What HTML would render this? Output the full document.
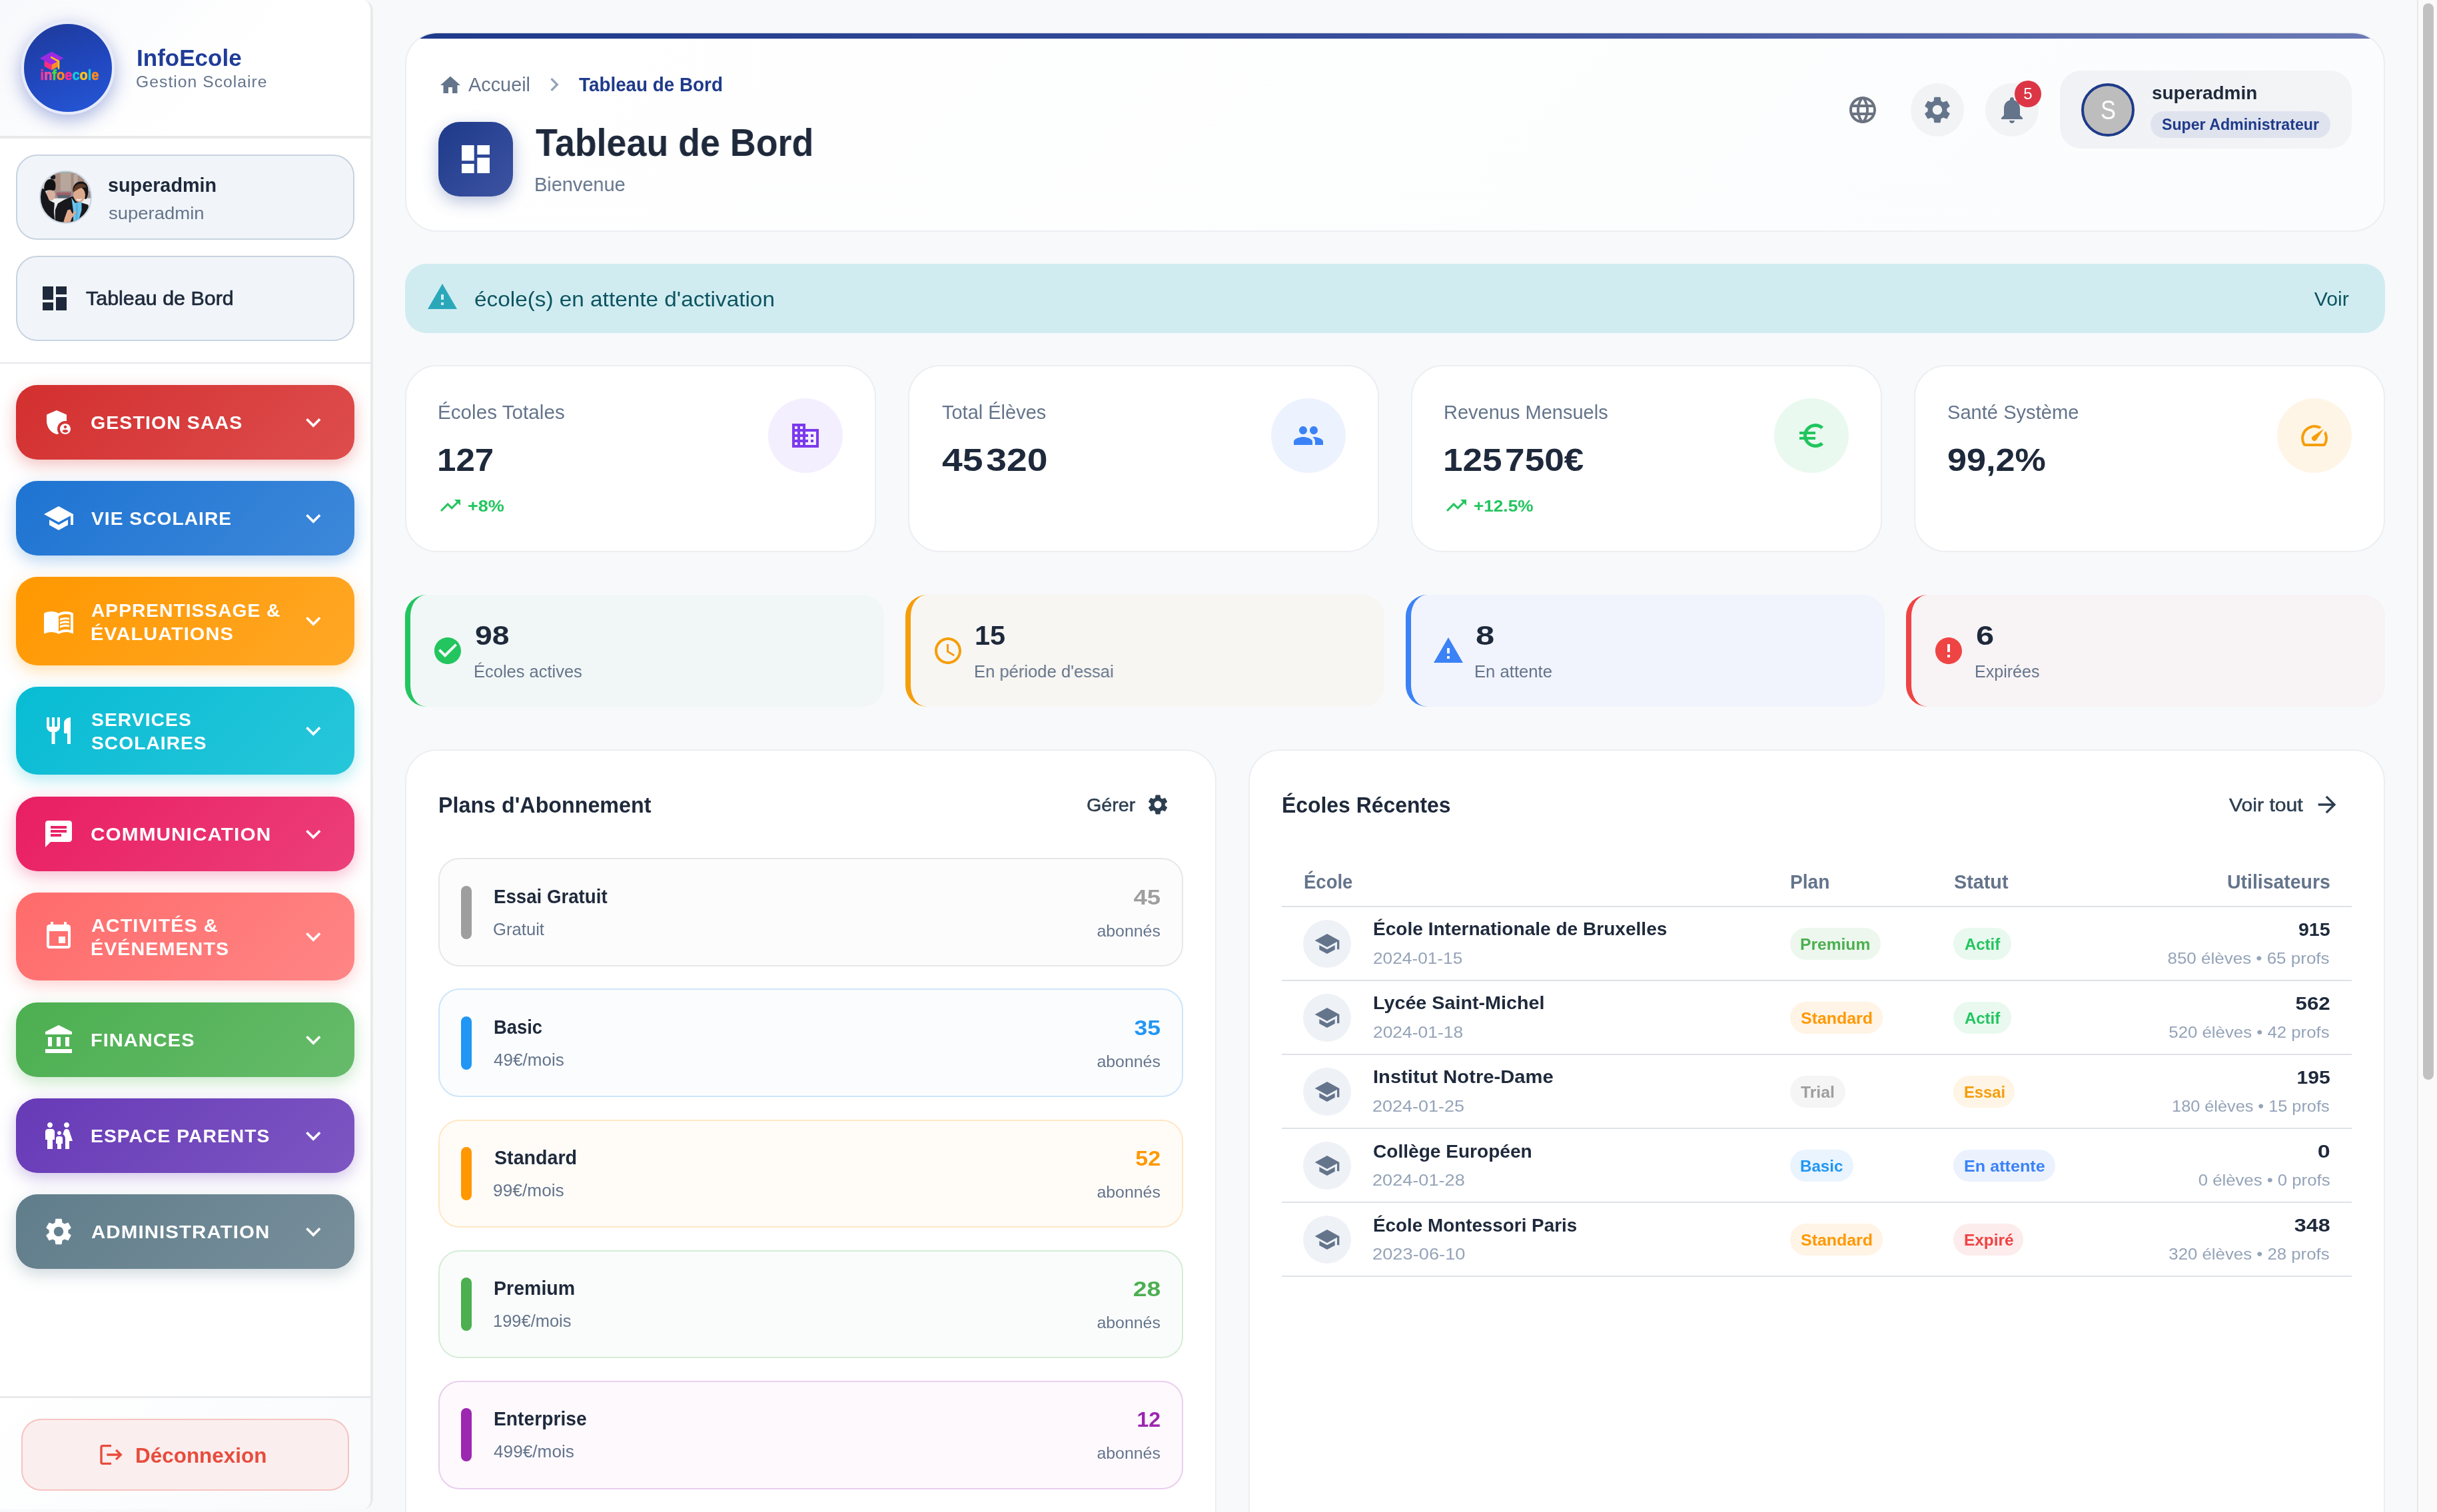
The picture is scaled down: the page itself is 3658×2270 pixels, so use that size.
<!DOCTYPE html>
<html lang="fr">
<head>
<meta charset="utf-8">
<title>InfoEcole - Tableau de Bord</title>
<style>
*{box-sizing:border-box;margin:0;padding:0}
html,body{width:3658px;height:2270px;overflow:hidden;background:#f8f9fb}
body{font-family:"Liberation Sans",sans-serif;color:#1e293b}
#root{position:absolute;left:0;top:0;width:3658px;height:2270px;overflow:hidden;will-change:transform}
svg{display:block;fill:currentColor}
.abs{position:absolute}
.t{position:absolute;white-space:nowrap;line-height:1}
b,.b{font-weight:700}
/* sidebar */
#sb{position:absolute;left:0;top:0;width:560px;height:2266px;background:#fff;border-right:4px solid #eaeaeb;border-radius:0 16px 16px 0;overflow:hidden}
#sbh{position:absolute;left:0;top:0;width:556px;height:208px;border-bottom:4px solid #e9e9ea;background:linear-gradient(135deg,#f8f9fc 0%,#fff 60%)}
#logo{position:absolute;left:32px;top:32px;width:140px;height:140px;border-radius:50%;border:4px solid #e6eafa;background:linear-gradient(160deg,#1e3a9a 0%,#2148c0 55%,#2558d8 100%);box-shadow:0 8px 28px rgba(30,58,170,.38)}
.ucard{position:absolute;left:24px;width:508px;height:127.5px;border-radius:32px;border:2px solid #c7d3e0;background:#f1f5f9}
.cat{position:absolute;left:24px;width:508px;border-radius:32px;color:#fff}
.cat svg.ic{position:absolute;left:40px;width:48px;height:48px}
.cat svg.ch{position:absolute;left:425px;width:40px;height:40px}
.cat .lb{position:absolute;left:112.6px;font-weight:700;font-size:28px;letter-spacing:1px;line-height:23.2px;white-space:nowrap}
#sbf{position:absolute;left:0;top:2096px;width:556px;height:174px;border-top:3px solid #e9eaec;background:linear-gradient(135deg,#fff 0%,#f8fafc 100%)}
#logout{position:absolute;left:32px;top:31px;width:492px;height:108px;border-radius:30px;border:2px solid #f6c3c0;background:#fbeeee;color:#e74c3c}
/* main */
.card{position:absolute;background:#fff;border:2px solid #eceef1;border-radius:48px}
.circ{position:absolute;border-radius:50%}
.chip{position:absolute;height:48px;border-radius:24px;font-weight:700;font-size:26px;line-height:48px;padding:0 22px;white-space:nowrap}
.st{position:absolute;top:893px;width:719px;height:168px;border-radius:32px;border-left:8px solid}
.plan{position:absolute;left:49px;width:1117px;height:164px;border-radius:32px;border:2px solid}
.plan i{position:absolute;left:32px;top:40px;width:16px;height:80px;border-radius:8px}
.row{position:absolute;left:48px;width:1607px;height:111.2px;border-bottom:2px solid #e2e4e8}
.gray{color:#64748b}
.lg{color:#94a3b8}
</style>
</head>
<body>
<div id="root">

<div id="sb">
<div id="sbh"><div id="logo"></div>
<svg class="abs" style="left:32px;top:32px;width:140px;height:140px" viewBox="0 0 70 70"><polygon points="17.3,29.3 22.74,32.2 22.74,36.7 17.3,33.9" fill="#ff2d7e"/><polygon points="22.74,32.2 27.6,29.6 27.6,34 22.74,36.7" fill="#ff8a2a"/><polygon points="13.8,27.7 22.74,22.7 31.7,27.6 22.74,32.5" fill="#9b2be3"/><path d="M22.6 27.1 L28 30 L28 35.4" fill="none" stroke="#ffc21a" stroke-width="1.3" stroke-linecap="round" stroke-linejoin="round"/><text x="14.3" y="44.05" font-family="Liberation Sans, sans-serif" font-weight="700" font-size="10.6" textLength="43.9" lengthAdjust="spacingAndGlyphs" stroke-width=".3" stroke-linejoin="round"><tspan fill="#ff2d95" stroke="#ff2d95">i</tspan><tspan fill="#ff4a9c" stroke="#ff4a9c">n</tspan><tspan fill="#4ade3a" stroke="#4ade3a">f</tspan><tspan fill="#ff8a1e" stroke="#ff8a1e">o</tspan><tspan fill="#ff2d95" stroke="#ff2d95">e</tspan><tspan fill="#19c8d8" stroke="#19c8d8">c</tspan><tspan fill="#ffc61a" stroke="#ffc61a">o</tspan><tspan fill="#19c8d8" stroke="#19c8d8">l</tspan><tspan fill="#ff8a1e" stroke="#ff8a1e">e</tspan></text></svg>
<div class="t" id="t1" style="top:69.6px;font-size:34.6px;color:#1f3c98;font-weight:700;left:204.78px;transform:scaleX(1.0131);transform-origin:0 0;">InfoEcole</div>
<div class="t" id="t2" style="top:110.72px;font-size:24.4px;color:#64748b;letter-spacing:1px;left:204.18px;transform:scaleX(1.0136);transform-origin:0 0;">Gestion Scolaire</div>
</div>
<div class="ucard" style="top:232px"></div>
<div class="abs" style="left:58.6px;top:256.2px;width:79.4px;height:79.4px;border-radius:50%;overflow:hidden;border:2px solid #c9d6e4;background:#d9d5d2"><svg style="position:absolute;left:-2px;top:-2px;width:79.4px;height:79.4px" viewBox="0 0 40 40"><rect width="40" height="40" fill="#cfccc9"/><rect x="11" y="0" width="25" height="17" fill="#a88c7f"/><rect x="16" y="1" width="8" height="15" fill="#b7a69c"/><rect x="26" y="3" width="3" height="12" fill="#b9aaa2"/><rect x="13" y="0" width="12" height="2" fill="#9fb0aa"/><rect x="34" y="6" width="6" height="20" fill="#c9c6c3"/><rect x="10" y="15.5" width="30" height="6" fill="#9d8f90"/><rect x="13" y="16.5" width="11" height="3" fill="#a06068"/><rect x="14" y="18.5" width="9" height="3" fill="#5a6470"/><rect x="8" y="21" width="32" height="5.5" fill="#eef0f1"/><rect x="8" y="26" width="14" height="14" fill="#dfe1e3"/><ellipse cx="8.6" cy="18.6" rx="3.4" ry="4.2" fill="#d9b09e"/><path d="M3.8 16 C3 10 5 6.500 8.500 6.500 C12 6.500 13 10 12 14.500 L10.500 15.300 C8 14.300 5.500 14.800 3.800 16z" fill="#121215"/><circle cx="10.3" cy="4.9" r="1.9" fill="#1a1a1e"/><path d="M0 13 L3.500 14 L5.500 18 L7.500 22.500 L11.500 24.500 L11 31 L12 40 L0 40z" fill="#17171c"/><path d="M12 30 L14 25 L19 22 L25 19.500 L31 24 L37 26 L38 40 L12 40z" fill="#18181d"/><path d="M25.300 15.500 C25.300 10.500 28.300 8.300 31.800 8.300 C35.300 8.300 37.300 11.500 37 15.800 C36.800 18.800 36.200 20.800 35.200 21.800 L33.700 20.800z" fill="#141417"/><ellipse cx="30.3" cy="18.5" rx="4.5" ry="5.6" fill="#dcaa8d"/><path d="M25.500 16.500 C25.800 12 28.500 10 31.500 10 C34 10 35.500 11.200 35.700 13 C33 12.500 30.500 13.200 28.700 14.500 C27.500 15.300 26.300 16 25.500 16.500z" fill="#5a3a26"/><path d="M28 21.300 C29.300 21.900 31 21.800 32.200 20.900 C31.800 22.400 30.900 23.100 29.900 23.100 C29 23.100 28.300 22.400 28 21.300z" fill="#f3ece8"/><path d="M24.300 20.500 L27 24.500 L32 23.500 L32 30 L29.700 38 L25.700 39.500 L25.600 30z" fill="#6cc4ee"/><path d="M27.600 25 L29.300 25 L29 37 L27.500 38z" fill="#55b1e0"/><path d="M21.300 30 L23.400 29.300 L25 32.600 L27.600 30.300 L28 31.500 L24.600 36 L23 40 L18 40 L19.300 35.500z" fill="#e2ab8d"/></svg></div>
<div class="t" id="t3" style="top:263px;font-size:29.8px;color:#1e293b;font-weight:700;left:162.24px;transform:scaleX(0.9659);transform-origin:0 0;">superadmin</div>
<div class="t" id="t4" style="top:306.82px;font-size:26.2px;color:#64748b;left:163.2px;transform:scaleX(1.0497);transform-origin:0 0;">superadmin</div>
<div class="ucard" style="top:384px"></div>
<svg class="abs" style="left:58px;top:424px;width:48px;height:48px;color:#1e293b;" viewBox="0 0 24 24"><path d="M3 13h8V3H3v10zm0 8h8v-6H3v6zm10 0h8V11h-8v10zm0-18v6h8V3h-8z"/></svg>
<div class="t" id="t5" style="top:432.9px;font-size:29.4px;color:#1e293b;left:129px;transform:scaleX(1.0361);transform-origin:0 0;-webkit-text-stroke:0.7px #1e293b;">Tableau de Bord</div>
<div class="abs" style="left:0;top:544px;width:556px;height:2px;background:#e5e7eb"></div>
<div class="cat" style="top:578px;height:111.5px;background:linear-gradient(135deg,#d32f2f 0%,#de4d4d 100%);box-shadow:0 8px 24px rgba(211,47,47,.3)"></div>
<svg class="abs" style="left:64px;top:609.76px;width:48px;height:48px;color:#fff;" viewBox="0 0 24 24"><path d="M17 11c.34 0 .67.04 1 .09V6.27L10.5 3 3 6.27v4.91c0 4.54 3.2 8.79 7.5 9.82.55-.13 1.08-.32 1.6-.55-.69-.98-1.1-2.17-1.1-3.45 0-3.31 2.69-6 6-6zM17 13c-2.21 0-4 1.79-4 4s1.79 4 4 4 4-1.79 4-4-1.79-4-4-4zm0 1.38c.62 0 1.12.51 1.12 1.12s-.51 1.12-1.12 1.12-1.12-.51-1.12-1.12.5-1.12 1.12-1.12zm0 5.37c-.93 0-1.74-.46-2.24-1.17.05-.72 1.51-1.08 2.24-1.08s2.19.36 2.24 1.08c-.5.71-1.31 1.17-2.24 1.17z"/></svg>
<svg class="abs" style="left:447.8px;top:611.54px;width:44.6px;height:44.6px;color:#fff;" viewBox="0 0 24 24"><path d="M16.59 8.59 12 13.17 7.41 8.59 6 10l6 6 6-6z"/></svg>
<div class="t" id="t6" style="top:621.16px;font-size:28px;color:#fff;font-weight:700;letter-spacing:1px;left:135.58px;transform:scaleX(1.0212);transform-origin:0 0;">GESTION SAAS</div>
<div class="cat" style="top:722px;height:111.5px;background:linear-gradient(135deg,#1e74d2 0%,#3d88da 100%);box-shadow:0 8px 24px rgba(25,118,210,.3)"></div>
<svg class="abs" style="left:64px;top:753.76px;width:48px;height:48px;color:#fff;" viewBox="0 0 24 24"><path d="M5 13.18v4L12 21l7-3.82v-4L12 17l-7-3.82zM12 3 1 9l11 6 9-4.91V17h2V9L12 3z"/></svg>
<svg class="abs" style="left:447.8px;top:755.54px;width:44.6px;height:44.6px;color:#fff;" viewBox="0 0 24 24"><path d="M16.59 8.59 12 13.17 7.41 8.59 6 10l6 6 6-6z"/></svg>
<div class="t" id="t7" style="top:765.16px;font-size:28px;color:#fff;font-weight:700;letter-spacing:1px;left:136.6px;transform:scaleX(1.0071);transform-origin:0 0;">VIE SCOLAIRE</div>
<div class="cat" style="top:866px;height:133px;background:linear-gradient(135deg,#ff9800 0%,#ffa726 100%);box-shadow:0 8px 24px rgba(255,152,0,.3)"></div>
<svg class="abs" style="left:64px;top:908.5px;width:48px;height:48px;color:#fff;" viewBox="0 0 24 24"><path d="M21 5c-1.11-.35-2.33-.5-3.5-.5-1.95 0-4.05.4-5.5 1.5-1.45-1.1-3.55-1.5-5.5-1.5S2.45 4.9 1 6v14.65c0 .25.25.5.5.5.1 0 .15-.05.25-.05C3.1 20.45 5.05 20 6.5 20c1.95 0 4.05.4 5.5 1.5 1.35-.85 3.8-1.5 5.5-1.5 1.65 0 3.35.3 4.75 1.05.1.05.15.05.25.05.25 0 .5-.25.5-.5V6c-.6-.45-1.25-.75-2-1zm0 13.5c-1.1-.35-2.3-.5-3.5-.5-1.7 0-4.15.65-5.5 1.5V8c1.35-.85 3.8-1.5 5.5-1.5 1.2 0 2.4.15 3.5.5v11.5zM17.5 10.5c.88 0 1.73.09 2.5.26V9.24c-.79-.15-1.64-.24-2.5-.24-1.7 0-3.24.29-4.5.83v1.66c1.13-.64 2.7-.99 4.5-.99zM13 12.49v1.66c1.13-.64 2.7-.99 4.5-.99.88 0 1.73.09 2.5.26V11.9c-.79-.15-1.64-.24-2.5-.24-1.7 0-3.24.3-4.5.83zm4.5 1.84c-1.7 0-3.24.29-4.5.83v1.66c1.13-.64 2.7-.99 4.5-.99.88 0 1.73.09 2.5.26v-1.52c-.79-.16-1.64-.24-2.5-.24z"/></svg>
<svg class="abs" style="left:447.8px;top:910.3px;width:44.6px;height:44.6px;color:#fff;" viewBox="0 0 24 24"><path d="M16.59 8.59 12 13.17 7.41 8.59 6 10l6 6 6-6z"/></svg>
<div class="t" id="t8" style="top:902.5px;font-size:28px;color:#fff;font-weight:700;letter-spacing:1px;left:136.6px;transform:scaleX(1.0064);transform-origin:0 0;">APPRENTISSAGE &amp;</div>
<div class="t" id="t9" style="top:937.5px;font-size:28px;color:#fff;font-weight:700;letter-spacing:1px;left:135.56px;transform:scaleX(1.0349);transform-origin:0 0;">ÉVALUATIONS</div>
<div class="cat" style="top:1030.5px;height:132.5px;background:linear-gradient(135deg,#08bcd4 0%,#27c6da 100%);box-shadow:0 8px 24px rgba(0,188,212,.3)"></div>
<svg class="abs" style="left:64px;top:1072.76px;width:48px;height:48px;color:#fff;" viewBox="0 0 24 24"><path d="M11 9H9V2H7v7H5V2H3v7c0 2.12 1.66 3.84 3.75 3.97V22h2.5v-9.03C11.34 12.84 13 11.12 13 9V2h-2v7zm5-3v8h2.5v8H21V2c-2.76 0-5 2.24-5 4z"/></svg>
<svg class="abs" style="left:447.8px;top:1074.54px;width:44.6px;height:44.6px;color:#fff;" viewBox="0 0 24 24"><path d="M16.59 8.59 12 13.17 7.41 8.59 6 10l6 6 6-6z"/></svg>
<div class="t" id="t10" style="top:1066.76px;font-size:28px;color:#fff;font-weight:700;letter-spacing:1px;left:136.6px;transform:scaleX(1.0121);transform-origin:0 0;">SERVICES</div>
<div class="t" id="t11" style="top:1101.76px;font-size:28px;color:#fff;font-weight:700;letter-spacing:1px;left:136.6px;transform:scaleX(1.0077);transform-origin:0 0;">SCOLAIRES</div>
<div class="cat" style="top:1196px;height:111.5px;background:linear-gradient(135deg,#e91e63 0%,#ec3f79 100%);box-shadow:0 8px 24px rgba(233,30,99,.3)"></div>
<svg class="abs" style="left:64px;top:1227.76px;width:48px;height:48px;color:#fff;" viewBox="0 0 24 24"><path d="M20 2H4c-1.1 0-1.99.9-1.99 2L2 22l4-4h14c1.1 0 2-.9 2-2V4c0-1.1-.9-2-2-2zM6 9h12v2H6V9zm8 5H6v-2h8v2zm4-6H6V6h12v2z"/></svg>
<svg class="abs" style="left:447.8px;top:1229.54px;width:44.6px;height:44.6px;color:#fff;" viewBox="0 0 24 24"><path d="M16.59 8.59 12 13.17 7.41 8.59 6 10l6 6 6-6z"/></svg>
<div class="t" id="t12" style="top:1239.16px;font-size:28px;color:#fff;font-weight:700;letter-spacing:1px;left:135.54px;transform:scaleX(1.0631);transform-origin:0 0;">COMMUNICATION</div>
<div class="cat" style="top:1340px;height:132px;background:linear-gradient(135deg,#ff6b6b 0%,#ff8585 100%);box-shadow:0 8px 24px rgba(255,107,107,.3)"></div>
<svg class="abs" style="left:64px;top:1382px;width:48px;height:48px;color:#fff;" viewBox="0 0 24 24"><path d="M17 12h-5v5h5v-5zM16 1v2H8V1H6v2H5c-1.11 0-1.99.9-1.99 2L3 19c0 1.1.89 2 2 2h14c1.1 0 2-.9 2-2V5c0-1.1-.9-2-2-2h-1V1h-2zm3 18H5V8h14v11z"/></svg>
<svg class="abs" style="left:447.8px;top:1383.8px;width:44.6px;height:44.6px;color:#fff;" viewBox="0 0 24 24"><path d="M16.59 8.59 12 13.17 7.41 8.59 6 10l6 6 6-6z"/></svg>
<div class="t" id="t13" style="top:1376px;font-size:28px;color:#fff;font-weight:700;letter-spacing:1px;left:136.6px;transform:scaleX(1.0293);transform-origin:0 0;">ACTIVITÉS &amp;</div>
<div class="t" id="t14" style="top:1411px;font-size:28px;color:#fff;font-weight:700;letter-spacing:1px;left:135.58px;transform:scaleX(1.0257);transform-origin:0 0;">ÉVÉNEMENTS</div>
<div class="cat" style="top:1505px;height:111.5px;background:linear-gradient(135deg,#4caf50 0%,#66bb6a 100%);box-shadow:0 8px 24px rgba(76,175,80,.3)"></div>
<svg class="abs" style="left:64px;top:1536.76px;width:48px;height:48px;color:#fff;" viewBox="0 0 24 24"><path d="M4 10h3v7H4zm6.5 0h3v7h-3zM2 19h20v3H2zm15-9h3v7h-3zm-5-9L2 6v2h20V6z"/></svg>
<svg class="abs" style="left:447.8px;top:1538.54px;width:44.6px;height:44.6px;color:#fff;" viewBox="0 0 24 24"><path d="M16.59 8.59 12 13.17 7.41 8.59 6 10l6 6 6-6z"/></svg>
<div class="t" id="t15" style="top:1548.16px;font-size:28px;color:#fff;font-weight:700;letter-spacing:1px;left:135.56px;transform:scaleX(1.0360);transform-origin:0 0;">FINANCES</div>
<div class="cat" style="top:1649px;height:111.5px;background:linear-gradient(135deg,#673ab7 0%,#7d56c2 100%);box-shadow:0 8px 24px rgba(103,58,183,.3)"></div>
<svg class="abs" style="left:64px;top:1680.76px;width:48px;height:48px;color:#fff;" viewBox="0 0 24 24"><path d="M16 4c0-1.11.89-2 2-2s2 .89 2 2-.89 2-2 2-2-.89-2-2zm4 18v-6h2.5l-2.54-7.63C19.68 7.55 18.92 7 18.06 7h-.12c-.86 0-1.63.55-1.9 1.37l-.86 2.58c1.08.6 1.82 1.73 1.82 3.05v8h3zm-7.5-10.5c.83 0 1.5-.67 1.5-1.5s-.67-1.5-1.5-1.5S11 9.17 11 10s.67 1.5 1.5 1.5zM5.5 6c1.11 0 2-.89 2-2s-.89-2-2-2-2 .89-2 2 .89 2 2 2zm2 16v-7H9V9c0-1.1-.9-2-2-2H4c-1.1 0-2 .9-2 2v6h1.5v7h4zm6.5 0v-4h1v-4c0-.82-.68-1.5-1.5-1.5h-2c-.82 0-1.5.68-1.5 1.5v4h1v4h3z"/></svg>
<svg class="abs" style="left:447.8px;top:1682.54px;width:44.6px;height:44.6px;color:#fff;" viewBox="0 0 24 24"><path d="M16.59 8.59 12 13.17 7.41 8.59 6 10l6 6 6-6z"/></svg>
<div class="t" id="t16" style="top:1692.16px;font-size:28px;color:#fff;font-weight:700;letter-spacing:1px;left:135.58px;transform:scaleX(1.0110);transform-origin:0 0;">ESPACE PARENTS</div>
<div class="cat" style="top:1793px;height:111.5px;background:linear-gradient(135deg,#607d8b 0%,#788f9b 100%);box-shadow:0 8px 24px rgba(96,125,139,.3)"></div>
<svg class="abs" style="left:64px;top:1824.76px;width:48px;height:48px;color:#fff;" viewBox="0 0 24 24"><path d="M19.14 12.94c.04-.3.06-.61.06-.94 0-.32-.02-.64-.07-.94l2.03-1.58c.18-.14.23-.41.12-.61l-1.92-3.32c-.12-.22-.37-.29-.59-.22l-2.39.96c-.5-.38-1.03-.7-1.62-.94l-.36-2.54c-.04-.24-.24-.41-.48-.41h-3.84c-.24 0-.43.17-.47.41l-.36 2.54c-.59.24-1.13.57-1.62.94l-2.39-.96c-.22-.08-.47 0-.59.22L2.74 8.87c-.12.21-.08.47.12.61l2.03 1.58c-.05.3-.09.63-.09.94s.02.64.07.94l-2.03 1.58c-.18.14-.23.41-.12.61l1.92 3.32c.12.22.37.29.59.22l2.39-.96c.5.38 1.03.7 1.62.94l.36 2.54c.05.24.24.41.48.41h3.84c.24 0 .44-.17.47-.41l.36-2.54c.59-.24 1.13-.56 1.62-.94l2.39.96c.22.08.47 0 .59-.22l1.92-3.32c.12-.22.07-.47-.12-.61l-2.01-1.58zM12 15.6c-1.98 0-3.6-1.62-3.6-3.6s1.62-3.6 3.6-3.6 3.6 1.62 3.6 3.6-1.62 3.6-3.6 3.6z"/></svg>
<svg class="abs" style="left:447.8px;top:1826.54px;width:44.6px;height:44.6px;color:#fff;" viewBox="0 0 24 24"><path d="M16.59 8.59 12 13.17 7.41 8.59 6 10l6 6 6-6z"/></svg>
<div class="t" id="t17" style="top:1836.16px;font-size:28px;color:#fff;font-weight:700;letter-spacing:1px;left:136.6px;transform:scaleX(1.0541);transform-origin:0 0;">ADMINISTRATION</div>
<div id="sbf"><div id="logout"></div></div>
<svg class="abs" style="left:146.6px;top:2163.8px;width:40px;height:40px;color:#e74c3c;" viewBox="0 0 24 24"><path d="m17 7-1.41 1.41L18.17 11H8v2h10.17l-2.58 2.58L17 17l5-5zM4 5h8V3H4c-1.1 0-2 .9-2 2v14c0 1.1.9 2 2 2h8v-2H4V5z"/></svg>
<div class="t" id="t18" style="top:2168.8px;font-size:32px;color:#e74c3c;font-weight:700;left:203.44px;transform:scaleX(0.9829);transform-origin:0 0;">Déconnexion</div>
</div>
<div class="card" style="left:608px;top:48px;width:2972px;height:299.5px;overflow:hidden;background:linear-gradient(135deg,#fff 0%,#fbfcfd 100%)"><div class="abs" style="left:0;top:0;width:2972px;height:8px;background:linear-gradient(90deg,#1e3a8a 0%,#3a4f9c 50%,#6b7ab5 100%)"></div></div>
<svg class="abs" style="left:658px;top:109.5px;width:36px;height:36px;color:#64748b;" viewBox="0 0 24 24"><path d="M10 20v-6h4v6h5v-8h3L12 3 2 12h3v8z"/></svg>
<div class="t" id="t19" style="top:113.2px;font-size:28.8px;color:#64748b;left:703.2px;transform:scaleX(1.0017);transform-origin:0 0;">Accueil</div>
<svg class="abs" style="left:811.6px;top:107px;width:40px;height:40px;color:#94a3b8;" viewBox="0 0 24 24"><path d="M10 6 8.59 7.41 13.17 12l-4.58 4.59L10 18l6-6z"/></svg>
<div class="t" id="t20" style="top:113.2px;font-size:28.8px;color:#1e3a8a;font-weight:700;left:869.2px;transform:scaleX(0.9662);transform-origin:0 0;">Tableau de Bord</div>
<div class="abs" style="left:658px;top:183px;width:112px;height:112px;border-radius:32px;background:linear-gradient(135deg,#1e3a8a 0%,#3d53a2 100%);box-shadow:0 8px 24px rgba(30,58,138,.3)"></div>
<svg class="abs" style="left:686px;top:211px;width:56px;height:56px;color:#fff;" viewBox="0 0 24 24"><path d="M3 13h8V3H3v10zm0 8h8v-6H3v6zm10 0h8V11h-8v10zm0-18v6h8V3h-8z"/></svg>
<div class="t" id="t21" style="top:186.42px;font-size:57.6px;color:#1e293b;font-weight:700;left:803.8px;transform:scaleX(0.9338);transform-origin:0 0;">Tableau de Bord</div>
<div class="t" id="t22" style="top:261.8px;font-size:29.4px;color:#64748b;left:801.84px;transform:scaleX(0.9842);transform-origin:0 0;">Bienvenue</div>
<svg class="abs" style="left:2772px;top:141px;width:48px;height:48px;color:#6b7280;" viewBox="0 0 24 24"><path d="M11.99 2C6.47 2 2 6.48 2 12s4.47 10 9.99 10C17.52 22 22 17.52 22 12S17.52 2 11.99 2zm6.93 6h-2.95c-.32-1.25-.78-2.45-1.38-3.56 1.84.63 3.37 1.91 4.33 3.56zM12 4.04c.83 1.2 1.48 2.53 1.91 3.96h-3.82c.43-1.43 1.08-2.76 1.91-3.96zM4.26 14C4.1 13.36 4 12.69 4 12s.1-1.36.26-2h3.38c-.08.66-.14 1.32-.14 2 0 .68.06 1.34.14 2H4.26zm.82 2h2.95c.32 1.25.78 2.45 1.38 3.56-1.84-.63-3.37-1.9-4.33-3.56zm2.95-8H5.08c.96-1.66 2.49-2.93 4.33-3.56C8.81 5.55 8.35 6.75 8.03 8zM12 19.96c-.83-1.2-1.48-2.53-1.91-3.96h3.82c-.43 1.43-1.08 2.76-1.91 3.96zM14.34 14H9.66c-.09-.66-.16-1.32-.16-2 0-.68.07-1.35.16-2h4.68c.09.65.16 1.32.16 2 0 .68-.07 1.34-.16 2zm.25 5.56c.6-1.11 1.06-2.31 1.38-3.56h2.95c-.96 1.65-2.49 2.93-4.33 3.56zM16.36 14c.08-.66.14-1.32.14-2 0-.68-.06-1.34-.14-2h3.38c.16.64.26 1.31.26 2s-.1 1.36-.26 2h-3.38z"/></svg>
<div class="circ" style="left:2868px;top:125px;width:80px;height:80px;background:#f1f3f5"></div>
<svg class="abs" style="left:2884px;top:141px;width:48px;height:48px;color:#64748b;" viewBox="0 0 24 24"><path d="M19.14 12.94c.04-.3.06-.61.06-.94 0-.32-.02-.64-.07-.94l2.03-1.58c.18-.14.23-.41.12-.61l-1.92-3.32c-.12-.22-.37-.29-.59-.22l-2.39.96c-.5-.38-1.03-.7-1.62-.94l-.36-2.54c-.04-.24-.24-.41-.48-.41h-3.84c-.24 0-.43.17-.47.41l-.36 2.54c-.59.24-1.13.57-1.62.94l-2.39-.96c-.22-.08-.47 0-.59.22L2.74 8.87c-.12.21-.08.47.12.61l2.03 1.58c-.05.3-.09.63-.09.94s.02.64.07.94l-2.03 1.58c-.18.14-.23.41-.12.61l1.92 3.32c.12.22.37.29.59.22l2.39-.96c.5.38 1.03.7 1.62.94l.36 2.54c.05.24.24.41.48.41h3.84c.24 0 .44-.17.47-.41l.36-2.54c.59-.24 1.13-.56 1.62-.94l2.39.96c.22.08.47 0 .59-.22l1.92-3.32c.12-.22.07-.47-.12-.61l-2.01-1.58zM12 15.6c-1.98 0-3.6-1.62-3.6-3.6s1.62-3.6 3.6-3.6 3.6 1.62 3.6 3.6-1.62 3.6-3.6 3.6z"/></svg>
<div class="circ" style="left:2980px;top:125px;width:80px;height:80px;background:#f1f3f5"></div>
<svg class="abs" style="left:2996px;top:141px;width:48px;height:48px;color:#64748b;" viewBox="0 0 24 24"><path d="M12 22c1.1 0 2-.9 2-2h-4c0 1.1.89 2 2 2zm6-6v-5c0-3.07-1.64-5.64-4.5-6.32V4c0-.83-.67-1.5-1.5-1.5s-1.5.67-1.5 1.5v.68C7.63 5.36 6 7.92 6 11v5l-2 2v1h16v-1l-2-2z"/></svg>
<div class="circ" style="left:3024px;top:121px;width:40px;height:40px;background:#dc3545"></div>
<div class="t" id="t23" style="top:129.2px;font-size:24px;color:#fff;left:3037.2px;">5</div>
<div class="abs" style="left:3092px;top:106px;width:438px;height:117px;border-radius:32px;background:linear-gradient(90deg,#f1f2f5,#f3f4f6)"></div>
<div class="circ" style="left:3124px;top:125px;width:80px;height:80px;background:#bdbdbd;border:4px solid #1e3a8a"></div>
<div class="t" id="t24" style="top:145.4px;font-size:40.6px;color:#fff;left:3152.96px;transform:scaleX(0.8476);transform-origin:0 0;">S</div>
<div class="t" id="t25" style="top:126.2px;font-size:27.6px;color:#1e293b;font-weight:700;left:3229.6px;transform:scaleX(1.0119);transform-origin:0 0;">superadmin</div>
<div class="abs" style="left:3228px;top:167px;width:270px;height:39.6px;border-radius:20px;background:#dfe3ee"></div>
<div class="t" id="t26" style="top:176px;font-size:23px;color:#1e3a8a;font-weight:700;left:3245px;transform:scaleX(1.0070);transform-origin:0 0;">Super Administrateur</div>
<div class="abs" style="left:608px;top:396px;width:2972px;height:104px;border-radius:32px;background:#d1ecf1"></div>
<svg class="abs" style="left:640px;top:422px;width:48px;height:48px;color:#2aa8ba;" viewBox="0 0 24 24"><path d="M1 21h22L12 2 1 21zm12-3h-2v-2h2v2zm0-4h-2v-4h2v4z"/></svg>
<div class="t" id="t27" style="top:432.5px;font-size:32px;color:#0c5460;left:712.16px;transform:scaleX(1.0413);transform-origin:0 0;">école(s) en attente d'activation</div>
<div class="t" id="t28" style="top:434.4px;font-size:30px;color:#0c5460;right:132.02px;transform:scaleX(1.0056);transform-origin:100% 0;">Voir</div>
<div class="card" style="left:608px;top:548px;width:707px;height:281px"></div>
<div class="t" id="t29" style="top:603.8px;font-size:29.4px;color:#64748b;left:656.98px;transform:scaleX(1.0092);transform-origin:0 0;">Écoles Totales</div>
<div class="t" id="t30" style="top:666px;font-size:48.6px;color:#1e293b;font-weight:700;left:655.84px;transform:scaleX(1.0519);transform-origin:0 0;">127</div>
<svg class="abs" style="left:658px;top:741px;width:36px;height:36px;color:#22c55e;" viewBox="0 0 24 24"><path d="m16 6 2.29 2.29-4.88 4.88-4-4L2 16.59 3.41 18l6-6 4 4 6.3-6.29L22 12V6z"/></svg>
<div class="t" id="t31" style="top:747.62px;font-size:24px;color:#22c55e;font-weight:700;left:702.08px;transform:scaleX(1.1275);transform-origin:0 0;">+8%</div>
<div class="circ" style="left:1153px;top:598px;width:112px;height:112px;background:#f3effe"></div>
<svg class="abs" style="left:1185px;top:630px;width:48px;height:48px;color:#7c3aed;" viewBox="0 0 24 24"><path d="M12 7V3H2v18h20V7H12zM6 19H4v-2h2v2zm0-4H4v-2h2v2zm0-4H4V9h2v2zm0-4H4V5h2v2zm4 12H8v-2h2v2zm0-4H8v-2h2v2zm0-4H8V9h2v2zm0-4H8V5h2v2zm10 12h-8v-2h2v-2h-2v-2h2v-2h-2V9h8v10zm-2-8h-2v2h2v-2zm0 4h-2v2h2v-2z"/></svg>
<div class="card" style="left:1363px;top:548px;width:707px;height:281px"></div>
<div class="t" id="t32" style="top:603.8px;font-size:29.4px;color:#64748b;left:1414px;transform:scaleX(0.9862);transform-origin:0 0;">Total Élèves</div>
<div class="t" id="t33" style="top:666px;font-size:48.6px;color:#1e293b;font-weight:700;left:1414px;transform:scaleX(1.1389);transform-origin:0 0;">45<span style="font-size:.42em">&#8239;</span>320</div>
<div class="circ" style="left:1908px;top:598px;width:112px;height:112px;background:#ecf3fe"></div>
<svg class="abs" style="left:1940px;top:630px;width:48px;height:48px;color:#3b82f6;" viewBox="0 0 24 24"><path d="M16 11c1.66 0 2.99-1.34 2.99-3S17.66 5 16 5c-1.66 0-3 1.34-3 3s1.34 3 3 3zm-8 0c1.66 0 2.99-1.34 2.99-3S9.66 5 8 5C6.34 5 5 6.34 5 8s1.34 3 3 3zm0 2c-2.33 0-7 1.17-7 3.5V19h14v-2.5c0-2.33-4.67-3.5-7-3.5zm8 0c-.29 0-.62.02-.97.05 1.16.84 1.97 1.97 1.97 3.45V19h6v-2.5c0-2.33-4.67-3.5-7-3.5z"/></svg>
<div class="card" style="left:2118px;top:548px;width:707px;height:281px"></div>
<div class="t" id="t34" style="top:603.8px;font-size:29.4px;color:#64748b;left:2167.02px;transform:scaleX(0.9868);transform-origin:0 0;">Revenus Mensuels</div>
<div class="t" id="t35" style="top:666px;font-size:48.6px;color:#1e293b;font-weight:700;left:2165.72px;transform:scaleX(1.0933);transform-origin:0 0;">125<span style="font-size:.42em">&#8239;</span>750€</div>
<svg class="abs" style="left:2168px;top:741px;width:36px;height:36px;color:#22c55e;" viewBox="0 0 24 24"><path d="m16 6 2.29 2.29-4.88 4.88-4-4L2 16.59 3.41 18l6-6 4 4 6.3-6.29L22 12V6z"/></svg>
<div class="t" id="t36" style="top:747.62px;font-size:24px;color:#22c55e;font-weight:700;left:2212.12px;transform:scaleX(1.0899);transform-origin:0 0;">+12.5%</div>
<div class="circ" style="left:2663px;top:598px;width:112px;height:112px;background:#e9f9ef"></div>
<svg class="abs" style="left:2695px;top:630px;width:48px;height:48px;color:#22c55e;" viewBox="0 0 24 24"><path d="M15 18.5c-2.51 0-4.68-1.42-5.76-3.5H15v-2H8.58c-.05-.33-.08-.66-.08-1s.03-.67.08-1H15V9H9.24C10.32 6.92 12.5 5.5 15 5.5c1.61 0 3.09.59 4.23 1.57L21 5.3C19.41 3.87 17.3 3 15 3c-3.92 0-7.24 2.51-8.48 6H3v2h3.06c-.04.33-.06.66-.06 1s.02.67.06 1H3v2h3.52c1.24 3.49 4.56 6 8.48 6 2.31 0 4.41-.87 6-2.3l-1.78-1.77c-1.13.98-2.6 1.57-4.22 1.57z"/></svg>
<div class="card" style="left:2873px;top:548px;width:707px;height:281px"></div>
<div class="t" id="t37" style="top:603.8px;font-size:29.4px;color:#64748b;left:2923px;transform:scaleX(0.9901);transform-origin:0 0;">Santé Système</div>
<div class="t" id="t38" style="top:666px;font-size:48.6px;color:#1e293b;font-weight:700;left:2922.92px;transform:scaleX(1.0724);transform-origin:0 0;">99,2%</div>
<div class="circ" style="left:3418px;top:598px;width:112px;height:112px;background:#fef5e7"></div>
<svg class="abs" style="left:3450px;top:630px;width:48px;height:48px;color:#f59e0b;" viewBox="0 0 24 24"><path d="m20.38 8.57-1.23 1.85a8 8 0 0 1-.22 7.58H5.07A8 8 0 0 1 15.58 6.85l1.85-1.23A10 10 0 0 0 3.35 19a2 2 0 0 0 1.72 1h13.85a2 2 0 0 0 1.74-1 10 10 0 0 0-.27-10.44zm-9.79 6.84a2 2 0 0 0 2.83 0l5.66-8.49-8.49 5.66a2 2 0 0 0 0 2.83z"/></svg>
<div class="st" style="left:608px;border-color:#22c55e;background:#f1f7f6"></div>
<svg class="abs" style="left:648.2px;top:952.8px;width:48px;height:48px;color:#22c55e;" viewBox="0 0 24 24"><path d="M12 2C6.48 2 2 6.48 2 12s4.48 10 10 10 10-4.48 10-10S17.52 2 12 2zm-2 15-5-5 1.41-1.41L10 14.17l7.59-7.59L19 8l-9 9z"/></svg>
<div class="t" id="t39" style="top:934.2px;font-size:41px;color:#1e293b;font-weight:700;left:712.66px;transform:scaleX(1.1300);transform-origin:0 0;">98</div>
<div class="t" id="t40" style="top:996px;font-size:25.8px;color:#64748b;left:711.42px;transform:scaleX(0.9877);transform-origin:0 0;">Écoles actives</div>
<div class="st" style="left:1359px;border-color:#f59e0b;background:#f8f6f2"></div>
<svg class="abs" style="left:1399.2px;top:952.8px;width:48px;height:48px;color:#f59e0b;" viewBox="0 0 24 24"><path d="M11.99 2C6.47 2 2 6.48 2 12s4.47 10 9.99 10C17.52 22 22 17.52 22 12S17.52 2 11.99 2zM12 20c-4.42 0-8-3.58-8-8s3.58-8 8-8 8 3.58 8 8-3.58 8-8 8zm.5-13H11v6l5.25 3.15.75-1.23-4.5-2.67z"/></svg>
<div class="t" id="t41" style="top:934.2px;font-size:41px;color:#1e293b;font-weight:700;left:1462.78px;transform:scaleX(1.0138);transform-origin:0 0;">15</div>
<div class="t" id="t42" style="top:996px;font-size:25.8px;color:#64748b;left:1462.42px;transform:scaleX(0.9917);transform-origin:0 0;">En période d'essai</div>
<div class="st" style="left:2110px;border-color:#3b82f6;background:#f1f4fc"></div>
<svg class="abs" style="left:2150.2px;top:952.8px;width:48px;height:48px;color:#3b82f6;" viewBox="0 0 24 24"><path d="M1 21h22L12 2 1 21zm12-3h-2v-2h2v2zm0-4h-2v-4h2v4z"/></svg>
<div class="t" id="t43" style="top:934.2px;font-size:41px;color:#1e293b;font-weight:700;left:2214.56px;transform:scaleX(1.2375);transform-origin:0 0;">8</div>
<div class="t" id="t44" style="top:996px;font-size:25.8px;color:#64748b;left:2213.42px;transform:scaleX(0.9941);transform-origin:0 0;">En attente</div>
<div class="st" style="left:2861px;border-color:#ef4444;background:#f8f3f4"></div>
<svg class="abs" style="left:2901.2px;top:952.8px;width:48px;height:48px;color:#ef4444;" viewBox="0 0 24 24"><path d="M12 2C6.48 2 2 6.48 2 12s4.48 10 10 10 10-4.48 10-10S17.52 2 12 2zm1 15h-2v-2h2v2zm0-4h-2V7h2v6z"/></svg>
<div class="t" id="t45" style="top:934.2px;font-size:41px;color:#1e293b;font-weight:700;left:2965.62px;transform:scaleX(1.1899);transform-origin:0 0;">6</div>
<div class="t" id="t46" style="top:996px;font-size:25.8px;color:#64748b;left:2964.46px;transform:scaleX(0.9705);transform-origin:0 0;">Expirées</div>
<div class="card" style="left:608px;top:1125px;width:1218.4px;height:1240px"></div>
<div class="t" id="t47" style="top:1192px;font-size:33.2px;color:#1e293b;font-weight:700;left:658.46px;transform:scaleX(0.9716);transform-origin:0 0;">Plans d'Abonnement</div>
<div class="t" id="t48" style="top:1194.8px;font-size:28px;color:#2c3e50;left:1630.78px;transform:scaleX(1.0249);transform-origin:0 0;-webkit-text-stroke:0.5px #2c3e50;">Gérer</div>
<svg class="abs" style="left:1720.4px;top:1190px;width:36px;height:36px;color:#2c3e50;" viewBox="0 0 24 24"><path d="M19.14 12.94c.04-.3.06-.61.06-.94 0-.32-.02-.64-.07-.94l2.03-1.58c.18-.14.23-.41.12-.61l-1.92-3.32c-.12-.22-.37-.29-.59-.22l-2.39.96c-.5-.38-1.03-.7-1.62-.94l-.36-2.54c-.04-.24-.24-.41-.48-.41h-3.84c-.24 0-.43.17-.47.41l-.36 2.54c-.59.24-1.13.57-1.62.94l-2.39-.96c-.22-.08-.47 0-.59.22L2.74 8.87c-.12.21-.08.47.12.61l2.03 1.58c-.05.3-.09.63-.09.94s.02.64.07.94l-2.03 1.58c-.18.14-.23.41-.12.61l1.92 3.32c.12.22.37.29.59.22l2.39-.96c.5.38 1.03.7 1.62.94l.36 2.54c.05.24.24.41.48.41h3.84c.24 0 .44-.17.47-.41l.36-2.54c.59-.24 1.13-.56 1.62-.94l2.39.96c.22.08.47 0 .59-.22l1.92-3.32c.12-.22.07-.47-.12-.61l-2.01-1.58zM12 15.6c-1.98 0-3.6-1.62-3.6-3.6s1.62-3.6 3.6-3.6 3.6 1.62 3.6 3.6-1.62 3.6-3.6 3.6z"/></svg>
<div class="abs" style="left:658px;top:1288.4px;width:1118.4px;height:162.8px;border-radius:32px;border:2px solid #e7e7e8;background:#fcfcfd"></div>
<div class="abs" style="left:691.8px;top:1329.8px;width:16px;height:80px;border-radius:8px;background:#9e9e9e"></div>
<div class="t" id="t49" style="top:1332px;font-size:29px;color:#1e293b;font-weight:700;left:740.84px;transform:scaleX(0.9537);transform-origin:0 0;">Essai Gratuit</div>
<div class="t" id="t50" style="top:1383px;font-size:25px;color:#64748b;left:739.98px;transform:scaleX(1.0258);transform-origin:0 0;">Gratuit</div>
<div class="t" id="t51" style="top:1331.7px;font-size:31.6px;color:#9e9e9e;font-weight:700;right:1916.14px;transform:scaleX(1.1566);transform-origin:100% 0;">45</div>
<div class="t" id="t52" style="top:1385.6px;font-size:24.2px;color:#64748b;right:1916.7px;transform:scaleX(1.0271);transform-origin:100% 0;">abonnés</div>
<div class="abs" style="left:658px;top:1484.4px;width:1118.4px;height:162.8px;border-radius:32px;border:2px solid #cde6fb;background:#fbfcfe"></div>
<div class="abs" style="left:691.8px;top:1525.8px;width:16px;height:80px;border-radius:8px;background:#2196f3"></div>
<div class="t" id="t53" style="top:1528px;font-size:29px;color:#1e293b;font-weight:700;left:740.86px;transform:scaleX(0.9441);transform-origin:0 0;">Basic</div>
<div class="t" id="t54" style="top:1579px;font-size:25px;color:#64748b;left:741px;transform:scaleX(1.0421);transform-origin:0 0;">49€/mois</div>
<div class="t" id="t55" style="top:1527.7px;font-size:31.6px;color:#2196f3;font-weight:700;right:1916.16px;transform:scaleX(1.1276);transform-origin:100% 0;">35</div>
<div class="t" id="t56" style="top:1581.6px;font-size:24.2px;color:#64748b;right:1916.7px;transform:scaleX(1.0271);transform-origin:100% 0;">abonnés</div>
<div class="abs" style="left:658px;top:1680.6px;width:1118.4px;height:162.8px;border-radius:32px;border:2px solid #ffe7c4;background:#fffcf8"></div>
<div class="abs" style="left:691.8px;top:1722px;width:16px;height:80px;border-radius:8px;background:#ff9800"></div>
<div class="t" id="t57" style="top:1724.2px;font-size:29px;color:#1e293b;font-weight:700;left:741.8px;transform:scaleX(0.9873);transform-origin:0 0;">Standard</div>
<div class="t" id="t58" style="top:1775.2px;font-size:25px;color:#64748b;left:739.94px;transform:scaleX(1.0525);transform-origin:0 0;">99€/mois</div>
<div class="t" id="t59" style="top:1723.9px;font-size:31.6px;color:#ff9800;font-weight:700;right:1916.18px;transform:scaleX(1.0756);transform-origin:100% 0;">52</div>
<div class="t" id="t60" style="top:1777.8px;font-size:24.2px;color:#64748b;right:1916.7px;transform:scaleX(1.0271);transform-origin:100% 0;">abonnés</div>
<div class="abs" style="left:658px;top:1876.6px;width:1118.4px;height:162.8px;border-radius:32px;border:2px solid #d5edd6;background:#fafcfb"></div>
<div class="abs" style="left:691.8px;top:1918px;width:16px;height:80px;border-radius:8px;background:#4caf50"></div>
<div class="t" id="t61" style="top:1920.2px;font-size:29px;color:#1e293b;font-weight:700;left:740.82px;transform:scaleX(0.9841);transform-origin:0 0;">Premium</div>
<div class="t" id="t62" style="top:1971.2px;font-size:25px;color:#64748b;left:739.98px;transform:scaleX(1.0188);transform-origin:0 0;">199€/mois</div>
<div class="t" id="t63" style="top:1919.9px;font-size:31.6px;color:#4caf50;font-weight:700;right:1916.12px;transform:scaleX(1.1791);transform-origin:100% 0;">28</div>
<div class="t" id="t64" style="top:1973.8px;font-size:24.2px;color:#64748b;right:1916.7px;transform:scaleX(1.0271);transform-origin:100% 0;">abonnés</div>
<div class="abs" style="left:658px;top:2072.8px;width:1118.4px;height:162.8px;border-radius:32px;border:2px solid #eaceef;background:#fdf9fd"></div>
<div class="abs" style="left:691.8px;top:2114.2px;width:16px;height:80px;border-radius:8px;background:#9c27b0"></div>
<div class="t" id="t65" style="top:2116.4px;font-size:29px;color:#1e293b;font-weight:700;left:740.82px;transform:scaleX(0.9738);transform-origin:0 0;">Enterprise</div>
<div class="t" id="t66" style="top:2167.4px;font-size:25px;color:#64748b;left:741px;transform:scaleX(1.0482);transform-origin:0 0;">499€/mois</div>
<div class="t" id="t67" style="top:2116.1px;font-size:31.6px;color:#9c27b0;font-weight:700;right:1916.22px;transform:scaleX(1.0123);transform-origin:100% 0;">12</div>
<div class="t" id="t68" style="top:2170px;font-size:24.2px;color:#64748b;right:1916.7px;transform:scaleX(1.0271);transform-origin:100% 0;">abonnés</div>
<div class="card" style="left:1874.4px;top:1125px;width:1705.6px;height:1240px"></div>
<div class="t" id="t69" style="top:1192px;font-size:33.2px;color:#1e293b;font-weight:700;left:1924.08px;transform:scaleX(0.9611);transform-origin:0 0;">Écoles Récentes</div>
<div class="t" id="t70" style="top:1195px;font-size:28px;color:#2c3e50;left:3346px;transform:scaleX(1.0781);transform-origin:0 0;-webkit-text-stroke:0.5px #2c3e50;">Voir tout</div>
<svg class="abs" style="left:3472.8px;top:1188.4px;width:40px;height:40px;color:#2c3e50;" viewBox="0 0 24 24"><path d="m12 4-1.41 1.41L16.17 11H4v2h12.17l-5.58 5.59L12 20l8-8z"/></svg>
<div class="t" id="t71" style="top:1310.4px;font-size:28.6px;color:#64748b;font-weight:700;left:1956.64px;transform:scaleX(0.9624);transform-origin:0 0;">École</div>
<div class="t" id="t72" style="top:1310.4px;font-size:28.6px;color:#64748b;font-weight:700;left:2686.82px;transform:scaleX(0.9840);transform-origin:0 0;">Plan</div>
<div class="t" id="t73" style="top:1310.4px;font-size:28.6px;color:#64748b;font-weight:700;left:2932.6px;transform:scaleX(1.0062);transform-origin:0 0;">Statut</div>
<div class="t" id="t74" style="top:1310.4px;font-size:28.6px;color:#64748b;font-weight:700;right:160.1px;transform:scaleX(0.9933);transform-origin:100% 0;">Utilisateurs</div>
<div class="abs" style="left:1924px;top:1359.7px;width:1606px;height:2px;background:#dfe2e6"></div>
<div class="abs" style="left:1924px;top:1471.2px;width:1606px;height:2px;background:#dfe2e6"></div>
<div class="circ" style="left:1956px;top:1381.2px;width:72px;height:72px;background:#eef1f6"></div>
<svg class="abs" style="left:1972.4px;top:1397px;width:40px;height:40px;color:#64748b;" viewBox="0 0 24 24"><path d="M5 13.18v4L12 21l7-3.82v-4L12 17l-7-3.82zM12 3 1 9l11 6 9-4.91V17h2V9L12 3z"/></svg>
<div class="t" id="t75" style="top:1381.4px;font-size:27.6px;color:#1e293b;font-weight:700;left:2060.58px;transform:scaleX(1.0170);transform-origin:0 0;">École Internationale de Bruxelles</div>
<div class="t" id="t76" style="top:1426.82px;font-size:24px;color:#94a3b8;left:2060.5px;transform:scaleX(1.0937);transform-origin:0 0;">2024-01-15</div>
<div class="abs" style="left:2687px;top:1392.6px;width:136px;height:48px;border-radius:24px;background:#edf7ee"></div>
<div class="t" id="t77" style="top:1406.2px;font-size:24.6px;color:#4caf50;font-weight:700;left:2702.2px;transform:scaleX(1.0002);transform-origin:0 0;">Premium</div>
<div class="abs" style="left:2932px;top:1392.6px;width:87px;height:48px;border-radius:24px;background:#e9f9ef"></div>
<div class="t" id="t78" style="top:1406.2px;font-size:24.6px;color:#22c55e;font-weight:700;left:2948.8px;transform:scaleX(0.9736);transform-origin:0 0;">Actif</div>
<div class="t" id="t79" style="top:1381.8px;font-size:28px;color:#1e293b;font-weight:700;right:160.42px;transform:scaleX(1.0228);transform-origin:100% 0;">915</div>
<div class="t" id="t80" style="top:1427.02px;font-size:24px;color:#94a3b8;right:161px;transform:scaleX(1.0825);transform-origin:100% 0;">850 élèves • 65 profs</div>
<div class="abs" style="left:1924px;top:1582.24px;width:1606px;height:2px;background:#dfe2e6"></div>
<div class="circ" style="left:1956px;top:1492.24px;width:72px;height:72px;background:#eef1f6"></div>
<svg class="abs" style="left:1972.4px;top:1508.04px;width:40px;height:40px;color:#64748b;" viewBox="0 0 24 24"><path d="M5 13.18v4L12 21l7-3.82v-4L12 17l-7-3.82zM12 3 1 9l11 6 9-4.91V17h2V9L12 3z"/></svg>
<div class="t" id="t81" style="top:1492.44px;font-size:27.6px;color:#1e293b;font-weight:700;left:2060.56px;transform:scaleX(1.0403);transform-origin:0 0;">Lycée Saint-Michel</div>
<div class="t" id="t82" style="top:1537.84px;font-size:24px;color:#94a3b8;left:2060.5px;transform:scaleX(1.1003);transform-origin:0 0;">2024-01-18</div>
<div class="abs" style="left:2687px;top:1503.64px;width:139.4px;height:48px;border-radius:24px;background:#fff4e5"></div>
<div class="t" id="t83" style="top:1517.26px;font-size:24.6px;color:#ff9800;font-weight:700;left:2703.2px;transform:scaleX(1.0135);transform-origin:0 0;">Standard</div>
<div class="abs" style="left:2932px;top:1503.64px;width:87px;height:48px;border-radius:24px;background:#e9f9ef"></div>
<div class="t" id="t84" style="top:1517.26px;font-size:24.6px;color:#22c55e;font-weight:700;left:2948.8px;transform:scaleX(0.9736);transform-origin:0 0;">Actif</div>
<div class="t" id="t85" style="top:1492.86px;font-size:28px;color:#1e293b;font-weight:700;right:160.36px;transform:scaleX(1.1182);transform-origin:100% 0;">562</div>
<div class="t" id="t86" style="top:1538.04px;font-size:24px;color:#94a3b8;right:161px;transform:scaleX(1.0742);transform-origin:100% 0;">520 élèves • 42 profs</div>
<div class="abs" style="left:1924px;top:1693.28px;width:1606px;height:2px;background:#dfe2e6"></div>
<div class="circ" style="left:1956px;top:1603.28px;width:72px;height:72px;background:#eef1f6"></div>
<svg class="abs" style="left:1972.4px;top:1619.08px;width:40px;height:40px;color:#64748b;" viewBox="0 0 24 24"><path d="M5 13.18v4L12 21l7-3.82v-4L12 17l-7-3.82zM12 3 1 9l11 6 9-4.91V17h2V9L12 3z"/></svg>
<div class="t" id="t87" style="top:1603.48px;font-size:27.6px;color:#1e293b;font-weight:700;left:2060.54px;transform:scaleX(1.0570);transform-origin:0 0;">Institut Notre-Dame</div>
<div class="t" id="t88" style="top:1648.9px;font-size:24px;color:#94a3b8;left:2060.48px;transform:scaleX(1.1234);transform-origin:0 0;">2024-01-25</div>
<div class="abs" style="left:2687px;top:1614.68px;width:82.6px;height:48px;border-radius:24px;background:#f5f5f5"></div>
<div class="t" id="t89" style="top:1628.28px;font-size:24.6px;color:#9e9e9e;font-weight:700;left:2703.2px;transform:scaleX(1.0048);transform-origin:0 0;">Trial</div>
<div class="abs" style="left:2932px;top:1614.68px;width:92px;height:48px;border-radius:24px;background:#fef5e6"></div>
<div class="t" id="t90" style="top:1628.28px;font-size:24.6px;color:#f59e0b;font-weight:700;left:2947.84px;transform:scaleX(0.9672);transform-origin:0 0;">Essai</div>
<div class="t" id="t91" style="top:1603.88px;font-size:28px;color:#1e293b;font-weight:700;right:160.38px;transform:scaleX(1.0765);transform-origin:100% 0;">195</div>
<div class="t" id="t92" style="top:1649.1px;font-size:24px;color:#94a3b8;right:161px;transform:scaleX(1.0530);transform-origin:100% 0;">180 élèves • 15 profs</div>
<div class="abs" style="left:1924px;top:1804.32px;width:1606px;height:2px;background:#dfe2e6"></div>
<div class="circ" style="left:1956px;top:1714.32px;width:72px;height:72px;background:#eef1f6"></div>
<svg class="abs" style="left:1972.4px;top:1730.12px;width:40px;height:40px;color:#64748b;" viewBox="0 0 24 24"><path d="M5 13.18v4L12 21l7-3.82v-4L12 17l-7-3.82zM12 3 1 9l11 6 9-4.91V17h2V9L12 3z"/></svg>
<div class="t" id="t93" style="top:1714.52px;font-size:27.6px;color:#1e293b;font-weight:700;left:2060.58px;transform:scaleX(1.0175);transform-origin:0 0;">Collège Européen</div>
<div class="t" id="t94" style="top:1759.92px;font-size:24px;color:#94a3b8;left:2060.46px;transform:scaleX(1.1300);transform-origin:0 0;">2024-01-28</div>
<div class="abs" style="left:2687px;top:1725.72px;width:95.2px;height:48px;border-radius:24px;background:#e9f4fe"></div>
<div class="t" id="t95" style="top:1739.32px;font-size:24.6px;color:#2196f3;font-weight:700;left:2702.22px;transform:scaleX(0.9818);transform-origin:0 0;">Basic</div>
<div class="abs" style="left:2932px;top:1725.72px;width:152.8px;height:48px;border-radius:24px;background:#ebf2fe"></div>
<div class="t" id="t96" style="top:1739.32px;font-size:24.6px;color:#3b82f6;font-weight:700;left:2947.78px;transform:scaleX(1.0238);transform-origin:0 0;">En attente</div>
<div class="t" id="t97" style="top:1714.92px;font-size:28px;color:#1e293b;font-weight:700;right:160.3px;transform:scaleX(1.2138);transform-origin:100% 0;">0</div>
<div class="t" id="t98" style="top:1760.12px;font-size:24px;color:#94a3b8;right:161px;transform:scaleX(1.0721);transform-origin:100% 0;">0 élèves • 0 profs</div>
<div class="abs" style="left:1924px;top:1915.36px;width:1606px;height:2px;background:#dfe2e6"></div>
<div class="circ" style="left:1956px;top:1825.36px;width:72px;height:72px;background:#eef1f6"></div>
<svg class="abs" style="left:1972.4px;top:1841.16px;width:40px;height:40px;color:#64748b;" viewBox="0 0 24 24"><path d="M5 13.18v4L12 21l7-3.82v-4L12 17l-7-3.82zM12 3 1 9l11 6 9-4.91V17h2V9L12 3z"/></svg>
<div class="t" id="t99" style="top:1825.56px;font-size:27.6px;color:#1e293b;font-weight:700;left:2060.6px;transform:scaleX(1.0083);transform-origin:0 0;">École Montessori Paris</div>
<div class="t" id="t100" style="top:1870.98px;font-size:24px;color:#94a3b8;left:2060.46px;transform:scaleX(1.1366);transform-origin:0 0;">2023-06-10</div>
<div class="abs" style="left:2687px;top:1836.76px;width:139.4px;height:48px;border-radius:24px;background:#fff4e5"></div>
<div class="t" id="t101" style="top:1850.36px;font-size:24.6px;color:#ff9800;font-weight:700;left:2703.2px;transform:scaleX(1.0135);transform-origin:0 0;">Standard</div>
<div class="abs" style="left:2932px;top:1836.76px;width:105.4px;height:48px;border-radius:24px;background:#fdecec"></div>
<div class="t" id="t102" style="top:1850.36px;font-size:24.6px;color:#ef4444;font-weight:700;left:2947.8px;transform:scaleX(0.9931);transform-origin:0 0;">Expiré</div>
<div class="t" id="t103" style="top:1825.96px;font-size:28px;color:#1e293b;font-weight:700;right:160.34px;transform:scaleX(1.1529);transform-origin:100% 0;">348</div>
<div class="t" id="t104" style="top:1871.18px;font-size:24px;color:#94a3b8;right:161px;transform:scaleX(1.0742);transform-origin:100% 0;">320 élèves • 28 profs</div>
<div class="abs" style="left:3628px;top:0;width:30px;height:2270px;background:#fafafa;border-left:2px solid #e8e8e8"></div>
<div class="abs" style="left:3636.6px;top:5px;width:16px;height:1616px;border-radius:8px;background:#c1c1c1"></div>
</div>
</body>
</html>
